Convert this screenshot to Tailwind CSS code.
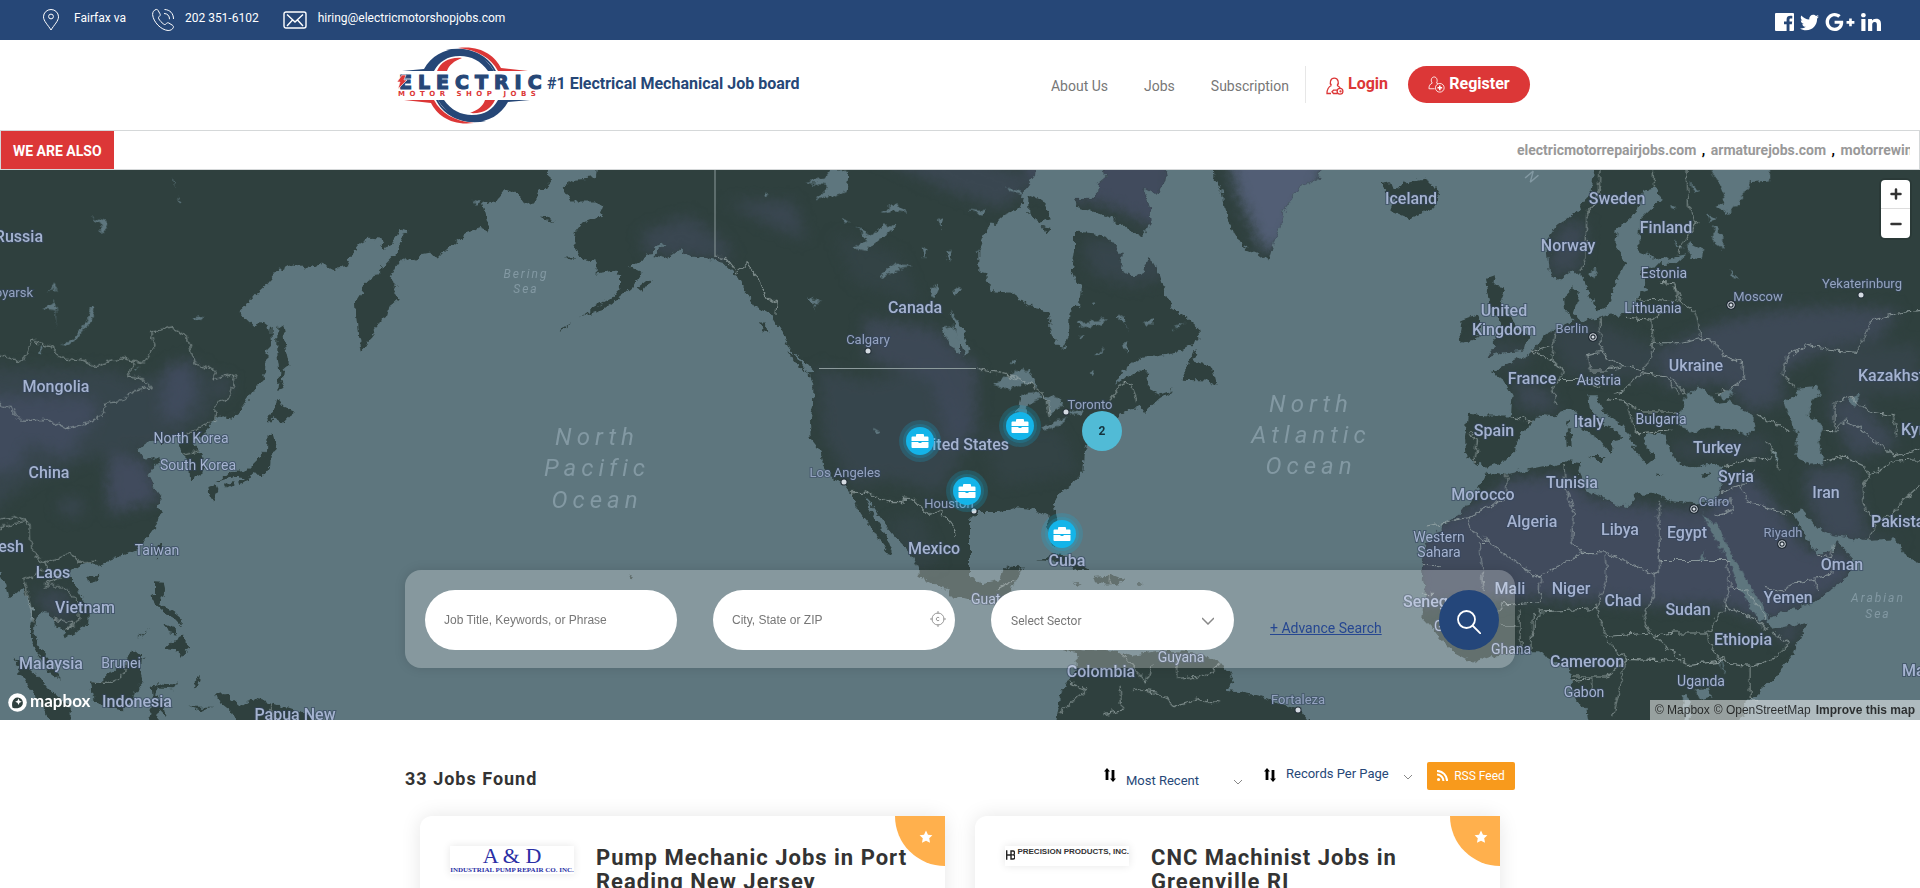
<!DOCTYPE html>
<html lang="en">
<head>
    <meta charset="UTF-8">
    <meta name="viewport" content="width=device-width, initial-scale=1.0">
    <script src="https://cdn.jsdelivr.net/npm/@tailwindcss/browser@4"></script>
    <title>Electric Motor Shop Jobs</title>
    <style>
        body { font-family: Roboto, 'Liberation Sans', sans-serif; }
    </style>
</head>
<body class="bg-white text-[#333] overflow-x-hidden">

<!-- top bar -->
<div class="flex items-center justify-between h-10 bg-[#264777] text-white text-xs pl-[42px] pr-[39px]">
    <div class="flex items-center">
        <svg class="w-[18px] h-[22px] mr-[14px]" viewBox="0 0 18 22" fill="none" stroke="currentColor"><path d="M9 21C6 16 1.500 12 1.500 7.800a7.500 7.300 0 0 1 15 0C16.500 12 12 16 9 21z"/><circle cx="9" cy="7.500" r="2.400"/></svg>
        <span class="mb-1 mr-[25px]">Fairfax va</span>
        <svg class="w-6 h-6 mr-[10px]" viewBox="0 0 24 24" fill="none" stroke="currentColor"><path d="M5 1.500C3 2 1.500 4 1.600 6.500c.6 7.500 8.500 15.500 15.500 16 2.500 0 4.400-1 5.200-3 .4-1-.1-1.700-.8-2.200l-3.700-2.300c-1-.5-1.700-.2-2.400.5-1.100 1.300-1.800 1.400-3 .4-2-1.600-3.400-3-4.500-4.900-.8-1.300-.4-1.900.6-2.800.8-.7 1-1.400.5-2.400L7 2.300C6.500 1.500 5.900 1.300 5 1.500zM13 5.500c3.500 0 5.600 2.400 5.500 5.700M13.500 1.500c5.500.2 9 4 9 9.500"/></svg>
        <span class="mb-1 mr-6">202 351-6102</span>
        <svg class="w-6 h-[18px] mr-[11px]" viewBox="0 0 24 18" fill="none" stroke="currentColor" stroke-width="1.400"><rect x="1" y="1" width="22" height="16" rx="2"/><path d="M4 3.500l8 7.500 8-7.500M4 15l5.500-6M20 15l-5.500-6"/></svg>
        <a class="mb-1" href="mailto:hiring@electricmotorshopjobs.com">hiring@electricmotorshopjobs.com</a>
    </div>
    <div class="flex items-center gap-[6px] pt-1">
        <a href="#" aria-label="Facebook"><svg class="w-[19px] h-[18px]" viewBox="0 0 19 18" fill="currentColor"><path d="M1 0h17a1 1 0 0 1 1 1v16a1 1 0 0 1-1 1h-3.500v-6.800h2.300l.4-2.800h-2.700V6.800c0-.9.300-1.400 1.400-1.400h1.400V2.900c-3.600-.5-5.700.4-5.700 3.600v1.900H9v2.800h2.600V18H1a1 1 0 0 1-1-1V1a1 1 0 0 1 1-1z"/></svg></a>
        <a href="#" aria-label="Twitter"><svg class="w-[19px] h-[19px]" viewBox="0 0 512 512" fill="currentColor"><path d="M459.37 151.716c.325 4.548.325 9.097.325 13.645 0 138.720-105.583 298.558-298.558 298.558-59.452 0-114.680-17.219-161.137-47.106 8.447.974 16.568 1.299 25.340 1.299 49.055 0 94.213-16.568 130.274-44.832-46.132-.975-84.792-31.188-98.112-72.772 6.498.974 12.995 1.624 19.818 1.624 9.421 0 18.843-1.300 27.614-3.573-48.081-9.747-84.143-51.980-84.143-102.985v-1.299c13.969 7.797 30.214 12.670 47.431 13.319-28.264-18.843-46.781-51.005-46.781-87.391 0-19.492 5.197-37.360 14.294-52.954 51.655 63.675 129.300 105.258 216.365 109.807-1.624-7.797-2.599-15.918-2.599-24.040 0-57.828 46.782-104.934 104.934-104.934 30.213 0 57.502 12.670 76.670 33.137 23.715-4.548 46.456-13.320 66.599-25.340-7.798 24.366-24.366 44.833-46.132 57.827 21.117-2.273 41.584-8.122 60.426-16.243-14.292 20.791-32.161 39.308-52.628 54.253z"/></svg></a>
        <a href="#" aria-label="Google Plus"><svg class="w-[30px] h-6" viewBox="0 0 640 512" fill="currentColor"><path d="M386.061 228.496c1.834 9.692 3.143 19.384 3.143 31.956C389.204 370.205 315.599 448 204.800 448c-106.084 0-192-85.915-192-192s85.916-192 192-192c51.864 0 95.083 18.859 128.611 50.292l-52.126 50.030c-14.145-13.621-39.028-29.599-76.485-29.599-65.484 0-118.920 54.221-118.920 121.277 0 67.056 53.436 121.277 118.920 121.277 75.961 0 104.513-54.745 108.965-82.773H204.800v-66.009h181.261zm185.406 6.437V179.200h-56.001v55.733h-55.733v56.001h55.733v55.733h56.001v-55.733H627.200v-56.001h-55.733z"/></svg></a>
        <a href="#" aria-label="LinkedIn"><svg class="w-5 h-[18px]" viewBox="0 0 448 448" fill="currentColor" preserveAspectRatio="none"><path d="M100.280 448H7.400V148.900h92.880zM53.790 108.100C24.090 108.100 0 83.500 0 53.800a53.790 53.790 0 0 1 107.580 0c0 29.700-24.100 54.300-53.790 54.300zM447.900 448h-92.680V302.400c0-34.700-.7-79.200-48.290-79.200-48.290 0-55.690 37.700-55.690 76.700V448h-92.780V148.900h89.080v40.800h1.300c12.400-23.500 42.690-48.300 87.880-48.300 94 0 111.280 61.900 111.280 142.300V448z"/></svg></a>
    </div>
</div>

<!-- header -->
<header class="h-[90px]">
    <div class="flex items-center justify-between h-full w-full max-w-[1140px] mx-auto pl-1">
        <a class="flex items-center" href="#">
            <svg class="w-[153px] h-[78px]" viewBox="0 0 153 78" role="img" aria-label="Electric Motor Shop Jobs">
                <g id="swoosh">
                    <path d="M8 25l22-2C37 10 50 3 64 3c16 0 29 10 36 22h-6C87 15 77 10 66 10c-13 0-21 6-26 15z" fill="#264777"/>
                    <path d="M52 4c24-5 43 6 50 21h-2C93 11 76 4 52 4z" fill="#264777"/>
                    <path d="M64 2c23-3 37 8 43 20l27 3h-30C97 12 84 4 64 2z" fill="#dc3737"/>
                    <path d="M43 25c4-9 12-14 25-13-8 3-13 7-15 13z" fill="#dc3737"/>
                </g>
                <use href="#swoosh" transform="rotate(180 72 39.500)"/>
                <g font-family="'DejaVu Sans', sans-serif" font-weight="700">
                    <text x="5" y="43" font-size="19" letter-spacing="6" fill="#264777" stroke="#264777" stroke-width="1.200">ELECTRIC</text>
                    <text x="4" y="50" font-size="7" letter-spacing="4.500" fill="#dc3737">MOTOR SHOP JOBS</text>
                </g>
                <path d="M8 29h4l-2 5h3L4 43l2-7H3z" fill="#dc3737" stroke="#fff" stroke-width=".6"/>
            </svg>
            <span class="font-bold text-base text-[#264777] -mt-[2px]">#1 Electrical Mechanical Job board</span>
        </a>
        <nav class="flex items-center text-sm text-[#777]">
            <a class="mr-9 pt-[2px]" href="#">About Us</a>
            <a class="mr-9 pt-[2px]" href="#">Jobs</a>
            <a class="pt-[2px]" href="#">Subscription</a>
            <div class="flex items-center h-[37px] -mt-[2px] ml-4 pl-5 border-l border-[#e7e7e7]">
                <a class="flex items-center gap-1 font-bold text-base leading-5 text-[#dc3737]" href="#">
                    <svg class="w-[18px] h-[18px] mt-1" viewBox="0 0 18 18" fill="none" stroke="currentColor" stroke-width="1.300"><path d="M5.500 8.500C3 6 4.500 1.200 8.300 1.200s5.300 4.800 2.800 7.300M5.500 8.500C3 9.500 1 12.500 1 16.500h4M11 8.500c1.500.6 2.500 1.500 3.200 2.500M11.500 13.200H7.500l-1.500 1.500 1.500 1.800h4"/><circle cx="14" cy="14.300" r="2.900"/><circle cx="14.500" cy="14.300" r=".5"/></svg>
                    Login
                </a>
                <a class="flex items-center justify-center gap-1 w-[122px] h-[37px] ml-5 rounded-full bg-[#dc3737] text-white font-bold text-base leading-5" href="#">
                    <svg class="w-[17px] h-[17px]" viewBox="0 0 18 18" fill="none" stroke="currentColor" stroke-width=".9"><path d="M4.500 7.500C2.500 5 3.500 1 6.500 1s4 4 2.500 6.500M4.500 7.500C2 8.500 1 10.500 1 13.500h6M9 7.500l1.500.5"/><circle cx="12.500" cy="12.500" r="4.600"/><path d="M12.500 10v5M10 12.500h5" stroke-width="1.600"/></svg>
                    Register
                </a>
            </div>
        </nav>
    </div>
</header>

<!-- network strip -->
<div class="flex items-center h-10 border border-[#d5d8d9] text-sm font-bold">
    <div class="flex items-center h-full px-3 pt-[2px] bg-[#dc3737] text-white">WE ARE ALSO</div>
    <div class="ml-auto mr-[9px] w-[393px] overflow-hidden whitespace-nowrap text-[#999]">
        <a href="#">electricmotorrepairjobs.com</a><span class="text-black mx-[2px]"> , </span><a href="#">armaturejobs.com</a><span class="text-black mx-[2px]"> , </span><a href="#">motorrewindingjobs.com</a>
    </div>
</div>

<!-- map -->
<section class="relative h-[550px] bg-[#5e767e] overflow-hidden">
    <svg class="w-full h-full block" viewBox="0 0 1920 550" preserveAspectRatio="xMidYMid slice">
        <defs>
            <filter id="rough" x="0" y="0" width="1920" height="550" filterUnits="userSpaceOnUse" color-interpolation-filters="sRGB">
                <feTurbulence type="fractalNoise" baseFrequency="0.14" numOctaves="3" seed="4" result="n"/>
                <feDisplacementMap in="SourceGraphic" in2="n" scale="8" xChannelSelector="R" yChannelSelector="G"/>
            </filter>
            <filter id="soft" color-interpolation-filters="sRGB"><feGaussianBlur stdDeviation="20"/></filter>
            <path id="asia" d="M-60-60H1640L1650 40 1620 60 1600 100 1570 90 1550 65 1515 55 1490 85 1445 95 1465 150 1468 175 1445 165 1400 180 1365 205 1330 235 1310 255 1290 235 1262 240 1245 255 1225 250 1200 260 1185 280 1172 305 1190 330 1180 350 1193 370 1172 385 1165 415 1140 430 1125 460 1110 480 1095 505 1082 512 1075 480 1070 430 1065 380 1085 350 1090 325 1120 310 1150 275 1190 235 1205 200 1222 175 1200 168 1190 190 1175 210 1150 225 1140 195 1110 193 1080 210 1055 240 1040 275 1000 285 960 265 930 280 880 272 835 285 800 325 760 360 735 390 715 408 745 430 760 445 790 432 815 450 815 490 800 520 798 580 770 615 740 655 715 690 685 710 660 700 640 715 620 740 622 750 590 765 580 780 600 800 612 840 605 865 570 882 568 830 545 810 540 785 560 755 520 760 490 785 470 770 440 775 415 795 435 825 480 825 460 850 445 870 465 910 485 935 470 960 487 975 470 1010 440 1050 410 1080 350 1105 290 1130 265 1118 240 1125 215 1140 212 1165 240 1210 270 1250 268 1290 230 1315 200 1335 190 1310 165 1300 150 1265 120 1260 105 1290 100 1320 125 1370 150 1400 175 1440 182 1455 150 1430 120 1385 90 1340 90 1300 100 1270 85 1220 70 1190 50 1205 25 1220 15 1180 0 1150-60 1120z"/>
            <path id="isles" d="M832 450L848 440 855 500 868 555 850 570 845 600 855 625 832 630 838 580 832 520zM828 652L850 675 885 690 865 705 848 722 820 705 805 720 800 705 822 690zM800 755L822 755 828 790 812 820 810 850 795 870 765 868 740 880 700 875 650 890 690 862 735 858 770 825 798 800zM625 905L650 895 655 915 640 945 628 925zM672 900L700 888 700 900 675 912zM715 890L738 875 732 892 718 898zM265 1160L298 1150 290 1170 270 1175zM470 1070L485 1060 478 1095 468 1105zM465 1175L492 1177 495 1200 480 1235 500 1250 520 1260 545 1280 545 1300 520 1275 490 1260 460 1235 455 1215 465 1210zM490 1290L515 1300 530 1325 505 1320zM515 1345L550 1330 565 1355 548 1385 530 1370 495 1365zM38 1390L70 1405 110 1440 160 1490 212 1530 212 1580H160L130 1530 90 1480zM270 1455L300 1460 320 1440 375 1410 390 1380 405 1370 435 1392 415 1410 430 1460 410 1480 400 1510 370 1540 310 1530 275 1500zM455 1465L530 1470 538 1455 520 1480 470 1478 465 1500 490 1520 500 1560 478 1540 470 1580H445L458 1510zM645 1495L685 1490 695 1510 720 1530 760 1505 820 1520 900 1545 960 1580H720L690 1540 650 1510zM585 1450L600 1440 595 1470 582 1480zM565 1530L640 1530 600 1540zM412 1337L448 1305 430 1325z"/>
            <path id="west" d="M365-60L350 20 290 25 245 50 275 90 345 90 370 105 360 130 310 150 285 180 280 210 300 250 350 258 350 295 400 288 420 300 420 335 400 360 345 390 300 420 370 398 430 355 460 330 485 290 450 275 480 262 500 250 530 215 560 208 520 245 555 255 600 225 640 250 690 255 730 265 770 300 800 350 830 390 870 410 890 440 910 470 930 510 960 545 985 580 1000 610 1000 650 990 710 992 765 1020 800 1035 850 1060 880 1095 900 1115 925 1130 960 1150 990 1175 1020 1200 1060 1225 1090 1240 1095 1220 1040 1190 1000 1165 960 1155 935 1180 960 1215 1010 1250 1050 1290 1090 1310 1130 1320 1160 1380 1190 1470 1220V-60zM180 130L200 132 230 148 205 145zM255 250L285 248 275 258zM470 335L500 312 515 315 490 348zM-60-60H10V100L30 165 25 178 0 160-40 60zM840 435L860 435 865 465 850 460zM922 520L950 525 1000 575 985 580 945 550zM448 1150L465 1155 455 1165zM232 458L270 437 255 452z"/>
            <path id="east" d="M-30-60H230L225 15 190 60 180 110 130 130 80 170 55 230 55 290 80 295 92 345 150 350 220 395 268 405 268 450 280 480 310 510 325 480 325 410 360 385 365 340 335 290 345 230 345 175 400 180 440 190 485 240 480 280 520 305 550 290 568 245 590 280 610 340 640 395 680 420 715 450 718 485 690 500 650 520 600 530 540 535 490 570 465 612 530 570 565 575 560 620 600 640 645 625 600 650 555 690 545 675 500 685 465 710 430 735 385 770 375 800 370 860 340 890 300 920 280 950 290 990 305 1040 300 1075 275 1070 265 1020 262 985 240 975 200 965 160 960 110 975 50 975 15 1010 0 1060 5 1110 30 1160 70 1180 120 1170 130 1140 150 1128 188 1130 175 1160 150 1197 160 1210 150 1260 200 1320 320 1360 480 1372 520 1385 600 1370 700 1375 760 1395 795 1415 820 1460 800 1485 850 1490 900 1500 960 1520 1020 1540 1065 1600H285L300 1500 320 1460 350 1430 350 1375 200 1340 140 1260 100 1235 50 1225-30 1215z"/>
            <path id="arctic" d="M420-60H610L620 20 590 70 550 50 570 110 575 150 545 190 500 165 450 135 350 105 345 80 410 80 415 40 440 20zM205 70L245 85 275 140 240 150 205 125zM245 160L270 165 255 182zM755-60H1095L1080 20 1020 50 975 110 965 150 940 210 925 260 890 235 850 220 810 160 790 100 785 60 760 20zM1260 40L1290 35 1300 60 1330 40 1390 25 1420 40 1440 70 1420 110 1350 138 1290 115 1300 90zM705 510L715 520 700 545 755 560 770 615 740 600 662 598 680 560zM232 1110L280 1095 340 1110 390 1140 350 1140 300 1115zM400 1160L460 1155 500 1170 470 1180 440 1182 405 1175zM340 1178L365 1178 355 1185zM530 1178H548L540 1183z"/>
            <path id="europe" d="M470-60L455 60 410 120 350 160 320 200 330 290 355 315 400 285 430 310 450 360 475 400 505 385 520 340 545 290 560 260 525 220 530 170 590 120 610 60 650 50 665 80 600 140 598 230 660 255 740 240 710 265 640 270 600 290 625 340 595 350 590 385 560 410 510 415 470 425 430 430 400 410 420 350 400 335 372 360 375 400 400 430 345 455 310 475 270 525 200 555 155 575 190 600 215 640 210 700 150 700 85 695 75 760 80 825 105 830 130 850 190 835 225 800 235 755 280 725 290 700 340 705 385 675 410 690 430 740 480 770 515 810 520 770 550 765 500 730 450 680 445 645 470 645 490 690 540 720 565 750 580 790 620 840 645 820 610 780 620 750 680 755 690 800 710 830 750 850 800 835 850 845 845 900 835 930 820 950 760 950 700 945 630 920 590 925 560 965 500 940 440 915 415 860 420 835 380 830 280 850 200 868 140 860 110 920 60 980 10 1010-40 1070-55 1130-45 1200-50 1280-20 1310 0 1335 50 1380 100 1405 160 1385 230 1375 300 1375 345 1400 390 1420 400 1500 440 1540 450 1600H890L920 1520 1000 1450 1060 1380 1100 1288 1000 1310 975 1285 1040 1255 1120 1235 1215 1165 1250 1120 1190 1060 1180 1090 1130 1095 1100 1050 1060 980 1085 965 1120 1010 1180 1040 1280 1055 1365 1050 1400 1100 1500 1150V-60z"/>
            <path id="britain" d="M135 310L165 300 160 330 195 335 180 370 200 410 235 450 265 475 255 510 190 520 140 535 165 505 160 480 185 440 150 390 140 340zM65 430L110 415 125 440 110 480 65 495 60 460zM445 815L490 815 485 835zM378 750L392 740 395 785 380 790zM380 715L390 712 388 735zM640 865L675 868 650 870zM785 872L815 865 795 878z"/>
            <clipPath id="land">
                <use href="#asia"/><use href="#isles"/>
                <use href="#west" transform="translate(1440 0)"/>
                <use href="#east" transform="translate(2880 0)"/><use href="#arctic" transform="translate(2880 0)"/>
                <use href="#europe" transform="translate(4320 0)"/><use href="#britain" transform="translate(4320 0)"/>
            </clipPath>
            <g id="case">
                <circle r="21" fill="#0fb4e8" opacity=".2"/><circle r="17" fill="#0fb4e8" opacity=".2"/>
                <circle r="14" fill="#14b4e9"/>
                <path d="M-7.500-4.500H-4v-1.500q0-1 1-1h6q1 0 1 1v1.500h3.500q1 0 1 1V0h-17v-3.500q0-1 1-1zM-8.500 1h7v1h3V1h7v5q0 1-1 1h-15q-1 0-1-1z" fill="#fff"/>
            </g>
            <g id="capital" fill="none" stroke="#d5dbe2"><circle r="5" fill="#232d36" stroke="none"/><circle r="3.300" stroke-width="1"/><circle r="1.500" fill="#d5dbe2" stroke="none"/></g>
            <g id="town"><circle r="3.600" fill="#26323a"/><circle r="2.500" fill="#d5dbe2"/></g>
        </defs>

        <!-- land: traced on a 5760 x 1568 sheet -->
        <g filter="url(#rough)">
            <g transform="scale(.33333 .35077)">
                <g clip-path="url(#land)">
                    <rect x="-60" y="-60" width="5900" height="1700" fill="#2f403e"/>
                    <g filter="url(#soft)" fill="#414b5d">
                        <path d="M-60 640L280 650 290 710 240 760 210 820 80 780 60 850-60 870zM500 560L570 540 590 640 540 720 480 700zM330 800L440 830 480 940 330 980 320 880z"/>
                        <path d="M-60 560L350 570 420 620 340 800 100 880-60 1000zM380 600L620 560 640 700 460 800 340 800z" opacity=".45"/>
                        <path d="M100 1200L200 1200 220 1300 130 1260zM640 590L700 600 680 650 640 640zM180 940L250 940 240 990 180 980z" opacity=".6"/>
                        <path d="M1920 180L2060 130 2170 200 2200 260 2120 250 1940 240z" opacity=".6"/>
                        <path d="M2180 90L2380 90 2420 200 2340 170zM2600-50H2900L3120 30 3000 110 2850 60z" opacity=".6"/>
                        <path d="M2590 420L2800 450 2930 560 2930 740 2850 800 2800 600 2600 540z" opacity=".75"/>
                        <path d="M2450 560L2600 600 2800 560 2920 760 2820 920 2660 880 2560 900 2470 760zM3240 200L3440 200 3520 300 3400 330 3280 300z" opacity=".45"/>
                        <path d="M2660 1000L2760 980 2820 1120 2740 1140zM2940 740L3180 740 3240 860 3000 900zM2500 180L2700 240 2760 380 2560 320z" opacity=".25"/>
                        <path d="M3680-50H3990L3950 60 3900 110 3840 220 3790 230 3710 60z" fill="#525e75"/>
                        <path d="M3050-50H3530L3500 180 3320 100 3120 60z"/>
                        <path d="M4290 1020L4450 940 4530 880 4700 870 4780 940 4980 960 5130 970 5160 900 5260 870 5330 960 5420 1080 5560 1090 5540 1180 5300 1290 5180 1240 4960 1240 4820 1230 4600 1220 4250 1240 4250 1080z"/>
                        <path d="M5170 430L5330 400 5500 390 5700 400 5640 480 5500 500 5340 580 5350 660 5250 690 5180 610 5000 620 4960 520zM5420 850L5560 850 5600 1040 5720 1060 5480 1060 5420 940zM5480 670L5560 640 5700 780 5560 820z" opacity=".8"/>
                        <path d="M4540 600L4640 620 4680 690 4560 680zM4680 150L4760 150 4740 280 4640 300zM5320 1300L5420 1280 5380 1350 5330 1340z" opacity=".7"/>
                        <path d="M5020 770L5300 760 5300 820 5020 830zM4640 460L4780 430 4960 500 4960 600 4700 580zM4400 480L4600 500 4580 560 4440 560zM5500 500L5760 500V640H5480z" opacity=".4"/>
                    </g>
                </g>
                <!-- lakes and inland seas -->
                <g fill="#5e767e">
                    <path d="M180 495L205 490 245 455 265 420 275 388 285 390 275 430 240 470 205 500zM120 500L128 502 124 525 118 522zM130 395L165 370 172 455 165 400zM140 350L160 320 175 350 158 335zM275 135L325 150 305 185 300 155zM515 18L527 45 520 40zM533 75L552 92 545 98zM580 422L605 415 605 425 588 432zM400 570L418 560 408 575zM1415 85L1440 90 1430 102z"/>
                    <g transform="translate(1440 0)"><path d="M975 35L1030 25 1060-10 1105 10 1100 60 1060 75 1010 80 1045 45zM1085 135L1110 148 1095 152zM1125 160L1175 190 1210 155 1250 158 1220 185 1190 205 1150 230 1120 222 1165 200zM1200 300L1240 270 1300 275 1250 285 1210 308zM1200 125L1245 95 1285 125 1240 115zM1370 145L1390 135 1385 165zM1355 335L1378 320 1365 365 1350 360zM1325 220L1340 225 1332 250zM1400 230L1415 228 1410 262zM1385 450L1420 445 1440 480 1440 530 1410 495zM980 360L1025 378 1000 380 1010 400zM1180 735L1198 745 1192 755zM1415 345L1440 335 1430 360zM855 65L870 72 858 78z"/></g>
                    <g transform="translate(2880 0)"><path d="M-30 400L5 450 28 510 15 530-5 480zM100 615L130 595 170 570 205 570 230 615 195 610 150 625zM185 640L235 635 245 650 205 665 195 700 170 690zM245 640L295 650 310 670 285 680 270 710 265 660zM245 735L280 715 328 705 290 730 262 740zM325 688L370 680 360 698 328 696zM155 545L168 535 165 555 150 555zM350 435L445 425 425 440 360 450zM470 420L495 412 485 430 512 465 495 440zM550 435L585 425 585 440 560 440zM405 530L430 505 415 530zM385 575L405 570 400 582zM488 495L505 490 500 520zM390 375L410 375 400 382zM25 110L75 115 65 130zM358 470L375 475 365 482zM640 450L675 432 655 450zM140 50L195 65 185 70 150 62z"/></g>
                    <g transform="translate(4320 0)"><path d="M775-60L830 30 860 80 830 105 870 125 910 80 930 35 990 30V-60zM745 205L790 225 785 255 745 245zM820 155L850 190 850 225 820 205zM800 125L830 140 812 145zM865 285L895 310 875 305zM750 35L780 60 765 65zM700 200L735 225 710 215zM690 100L710 105 695 112zM445 290L470 280 460 310z"/>
                    <path d="M715 725L720 690 740 640 775 620 810 640 830 665 870 660 930 695 945 740 920 755 860 735 800 735 750 750zM830 640L885 618 870 650 850 652zM1030 660L1070 640 1080 620 1130 615 1145 640 1110 660 1105 700 1150 730 1135 770 1155 835 1110 840 1065 810 1075 760 1040 690zM785 975L830 1060 870 1120 900 1200 960 1285 990 1275 960 1230 900 1140 860 1060 825 1000 815 1010 800 990zM1225 650L1260 640 1245 680zM1000 800L1015 820 1005 830zM765 1480L810 1475 815 1500 780 1510zM725 1500L745 1500 750 1580H735zM775 1115L795 1080 790 1105zM840 1390L858 1440 848 1430z"/></g>
                </g>
                <!-- borders -->
                <g fill="none" stroke="#a3b0b0" stroke-opacity=".75">
                    <g stroke-width="3"><path d="M-20 525L70 545 95 487 150 500 180 535 240 540 290 560 360 535 430 550 465 500 455 465 515 447 560 475 585 550 640 570 640 598 705 580 690 650 650 665 645 715 560 750M400 545L382 590 430 595 452 620 400 630 365 660 315 665 310 695 275 718 195 737 150 715 50 712 35 680-20 665M0 995L50 985 90 1010 92 1080 130 1120 180 1105 210 1090 235 1118 290 1115M130 1120L155 1150 180 1160 130 1185 190 1185 240 1240 235 1290 200 1310M70 1170L130 1140M75 1170L100 1290M160 1280L220 1290 200 1310M0 1020L80 1000M275 1460L340 1460 378 1430 380 1400M815 1520V1580M545 810L600 800"/></g>
                    <g transform="translate(4320 0)" stroke-width="3"><path d="M480-20L478 60 465 100 440 125 438 250 420 290M640-20L640 50M740-20L745 100 770 150 710 240M660 320L705 325 720 375 760 400 785 480 720 495 635 495M590 370L700 375M705 330L710 375M560 420L635 425 640 520 610 570 550 560 480 520 440 530 450 570 500 570 550 560M635 430L680 400M780 480L815 485 850 530 910 550 910 600 830 640M480 425L485 520M345 455L335 540 370 570 360 600 335 630 355 670M275 515L340 545M360 600L440 600M210 700L280 718M105 830L112 770 85 750M500 655L560 660 610 690 710 690M520 640L550 630 600 580 680 590 720 640M690 590L740 640M560 660L570 700 590 750 690 740M440 600L480 620M280 515L330 500M945 700L1000 720 1050 745M980 770L1000 800 1020 860M850 845L910 830 990 820M900 910L940 850M840 920L900 900 920 940 1000 970 1060 980M820 950L870 940 880 970 830 985M1270 490L1250 520 1160 510 1100 500 1040 530 1030 580 1065 620M1270 490L1290 430 1390 405 1450 400M1185 745V660L1230 645 1290 690 1360 700 1370 760M1150 740H1190L1215 715 1270 740 1300 770 1365 815 1450 790M1155 830L1210 815 1270 840 1290 870 1265 900 1275 970 1310 1000 1285 1055M1290 870L1360 830 1450 825M1450 890L1390 940 1360 980 1310 1000M655 940L658 1113H870M658 1113V1145L640 1150 500 1092 430 1090 395 1060 400 970 375 900 372 840M200 868V935L85 990V1020M85 990L-40 1015M85 1020L290 1160 435 1088M118 1062H140L120 1062 132 1200M285 1160H302L300 1230 190 1240 150 1290M495 1092L500 1160 470 1250 300 1260M640 1150V1220L610 1270 630 1320 500 1330 480 1280 465 1240M860 1110L870 1190 850 1250 800 1320 700 1320 640 1330M870 1190L920 1200 985 1280M850 1240L960 1290 980 1310M800 1320L820 1370 870 1410 930 1415 1000 1395 1050 1350 1000 1320M930 1415V1500L950 1520M870 1410L830 1390M630 1320L740 1410 850 1400M490 1330L560 1395 700 1400M560 1395L540 1470 520 1560M400 1445H500L560 1395M240 1255V1375M280 1260L275 1370M300 1255L280 1320M185 1300L235 1300M1130 1100L1170 1105 1185 1070M1035 1200L1060 1175 1170 1155 1180 1110M970 1190L1035 1200M1120 1165L1135 1200M395 1460L455 1450V1480"/></g>
                    <g transform="translate(2880 0)" stroke-width="3"><path d="M50 565L150 585 230 620 265 660 270 710M450 660L490 605 515 610 530 660M320 1460L380 1480 330 1520 300 1550M480 1372L520 1420 560 1460 580 1410M650 1400L650 1450 740 1440 780 1410M520 1480L600 1490 640 1530 720 1510 780 1520M480 1470L485 1540 430 1550M110 1195L165 1170M1385 1128H1440M1390 1210H1420M450 1155L448 1180"/></g>
                    <g transform="translate(1440 0)" stroke-width="3"><path d="M705 245L735 250 770 290 800 265 830 300 860 365 892 375 888 410M1110 920L1155 918 1215 945H1265L1268 935 1300 937 1350 985 1380 970 1415 1010 1425 1040"/></g>
                </g>
            </g>
        </g>
        <g stroke="#8c9a9b" stroke-width="1"><path d="M715 0V86"/><path d="M819 198.500H976"/></g>

        <!-- sea names -->
        <g fill="#8399a3" font-style="italic" text-anchor="middle">
            <g font-size="24" letter-spacing="5">
                <text x="597" y="275">North</text><text x="597" y="306">Pacific</text><text x="597" y="338">Ocean</text>
                <text x="1311" y="242">North</text><text x="1311" y="273">Atlantic</text><text x="1311" y="304">Ocean</text>
            </g>
            <g font-size="12" letter-spacing="2">
                <text x="526" y="108">Bering</text><text x="526" y="123">Sea</text>
                <text x="1878" y="432">Arabian</text><text x="1878" y="448">Sea</text>
            </g>
            <text x="1532" y="12" font-size="15" transform="rotate(40 1532 6)">N</text>
        </g>

        <!-- countries -->
        <g fill="#a5b3d0" stroke="#33445f" stroke-opacity=".6" stroke-width="2" paint-order="stroke" font-weight="500" text-anchor="middle">
            <g font-size="16">
                <text x="56" y="222">Mongolia</text><text x="49" y="308">China</text><text x="53" y="408">Laos</text><text x="85" y="443">Vietnam</text>
                <text x="51" y="499">Malaysia</text><text x="137" y="537">Indonesia</text><text x="295" y="550">Papua New</text>
                <text x="915" y="143">Canada</text><text x="934" y="384">Mexico</text><text x="1067" y="396">Cuba</text><text x="1101" y="507">Colombia</text>
                <text x="1411" y="34">Iceland</text><text x="1617" y="34">Sweden</text><text x="1666" y="63">Finland</text><text x="1568" y="81">Norway</text>
                <text x="1504" y="146">United</text><text x="1504" y="165">Kingdom</text><text x="1532" y="214">France</text><text x="1696" y="201">Ukraine</text>
                <text x="1494" y="266">Spain</text><text x="1589" y="257">Italy</text><text x="1717" y="283">Turkey</text><text x="1736" y="312">Syria</text>
                <text x="1572" y="318">Tunisia</text><text x="1483" y="330">Morocco</text><text x="1826" y="328">Iran</text><text x="1532" y="357">Algeria</text>
                <text x="1620" y="365">Libya</text><text x="1687" y="368">Egypt</text><text x="1842" y="400">Oman</text><text x="1510" y="424">Mali</text>
                <text x="1571" y="424">Niger</text><text x="1623" y="436">Chad</text><text x="1688" y="445">Sudan</text><text x="1788" y="433">Yemen</text>
                <text x="1743" y="475">Ethiopia</text><text x="1587" y="497">Cameroon</text>
                <g text-anchor="end"><text x="43" y="72">Russia</text><text x="24" y="382">Bangladesh</text><text x="1009" y="280">United States</text></g>
                <g text-anchor="start"><text x="1403" y="437">Senegal</text><text x="1858" y="211">Kazakhstan</text><text x="1901" y="265">Kyrgyzstan</text><text x="1871" y="357">Pakistan</text><text x="1902" y="506">Maldives</text></g>
            </g>
            <g font-size="14" font-weight="400">
                <text x="191" y="273">North Korea</text><text x="198" y="300">South Korea</text><text x="157" y="385">Taiwan</text><text x="121" y="498">Brunei</text>
                <text x="1181" y="492">Guyana</text><text x="1439" y="372">Western</text><text x="1439" y="387">Sahara</text><text x="1664" y="108">Estonia</text>
                <text x="1653" y="143">Lithuania</text><text x="1599" y="215">Austria</text><text x="1661" y="254">Bulgaria</text><text x="1511" y="484">Ghana</text>
                <text x="1584" y="527">Gabon</text><text x="1701" y="516">Uganda</text>
                <text x="971" y="434" text-anchor="start">Guatemala</text><text x="1434" y="461" text-anchor="start">Guinea</text>
            </g>
        </g>

        <!-- cities -->
        <g fill="#94a3c0" stroke="#33445f" stroke-opacity=".5" stroke-width="2" paint-order="stroke" font-size="13" text-anchor="middle">
            <text x="33" y="127" text-anchor="end">Krasnoyarsk</text><text x="868" y="174">Calgary</text><text x="845" y="307">Los Angeles</text>
            <text x="949" y="338">Houston</text><text x="1090" y="239">Toronto</text><text x="1298" y="534">Fortaleza</text><text x="1758" y="131">Moscow</text>
            <text x="1862" y="118">Yekaterinburg</text><text x="1572" y="163">Berlin</text><text x="1714" y="336">Cairo</text><text x="1783" y="367">Riyadh</text>
        </g>
        <use href="#town" x="868" y="181"/><use href="#town" x="844" y="312"/><use href="#town" x="974" y="341"/><use href="#town" x="1066" y="242"/><use href="#town" x="1298" y="540"/><use href="#town" x="1861" y="125"/>
        <use href="#capital" x="1731" y="135"/><use href="#capital" x="1593" y="167"/><use href="#capital" x="1694" y="339"/><use href="#capital" x="1782" y="374"/>

        <!-- job pins -->
        <use href="#case" x="920" y="271"/><use href="#case" x="1020" y="256"/><use href="#case" x="967" y="321"/><use href="#case" x="1062" y="364"/>
        <circle cx="1102" cy="261" r="20" fill="#51bbd6"/>
        <text x="1102" y="265" font-size="12" font-weight="700" text-anchor="middle" fill="#14323c">2</text>
    </svg>

    <!-- zoom -->
    <div class="absolute top-[10px] right-[10px] w-[29px] rounded bg-white divide-y divide-[#ddd] shadow-[0_0_0_2px_rgba(0,0,0,0.1)]">
        <button class="flex items-center justify-center w-full h-[29px]" aria-label="Zoom in"><svg class="w-3 h-3" viewBox="0 0 12 12" stroke="#333" stroke-width="2.500" stroke-linecap="round"><path d="M1.500 6h9M6 1.500v9"/></svg></button>
        <button class="flex items-center justify-center w-full h-[29px]" aria-label="Zoom out"><svg class="w-3 h-3" viewBox="0 0 12 12" stroke="#333" stroke-width="2.500" stroke-linecap="round"><path d="M1.500 6h9"/></svg></button>
    </div>

    <!-- mapbox mark -->
    <a class="absolute left-2 bottom-2 flex items-center gap-[3px] h-5 text-white" href="#">
        <svg class="w-[19px] h-[19px]" viewBox="0 0 19 19"><circle cx="9.500" cy="9.500" r="9.300" fill="#fff"/><path d="M4.500 14.800c-1-3.600-.4-6.800 1.600-8.800a5.200 5.200 0 0 1 7.400 7.300c-2 2-5.400 2.600-9 1.500z" fill="#2f403e"/><path d="M10.500 5.500l1 2.300 2.300 1-2.300 1-1 2.300-1-2.300-2.300-1 2.300-1z" fill="#fff"/></svg>
        <span class="font-['Lato'] font-bold text-[17px] leading-5 pb-[2px]">mapbox</span>
    </a>

    <!-- attribution -->
    <div class="absolute right-0 bottom-0 flex gap-1 h-5 px-[5px] bg-white/50 text-xs leading-5 text-black/75 font-['Liberation_Sans'] whitespace-nowrap">
        <a href="#">© Mapbox</a><a class="mr-px" href="#">© OpenStreetMap</a><a class="font-bold" href="#">Improve this map</a>
    </div>

    <!-- search -->
    <form class="absolute inset-x-0 bottom-[52px] mx-auto w-full max-w-[1110px] grid grid-cols-[252px_242px_243px_1fr_60px] gap-9 pl-5 pr-4 pt-5 pb-[18px] rounded-2xl bg-white/25 shadow-[0_0_12px_rgba(0,0,0,0.12)] text-[#777]">
        <input class="h-[60px] min-w-0 px-[19px] rounded-full bg-white text-xs font-['Liberation_Sans'] placeholder:text-[#777] outline-none" type="text" aria-label="Keywords" placeholder="Job Title, Keywords, or Phrase">
        <div class="relative">
            <input class="w-full h-[60px] px-[19px] rounded-full bg-white text-xs font-['Liberation_Sans'] placeholder:text-[#777] outline-none" type="text" aria-label="Location" placeholder="City, State or ZIP">
            <svg class="absolute right-[9px] top-[21px] w-4 h-4" viewBox="0 0 16 16" fill="none" stroke="#999"><circle cx="8" cy="8" r="6"/><path d="M8 0v3M8 13v3M0 8h3M13 8h3M9.200 6.800a1.700 1.700 0 1 0 0 2.400"/></svg>
        </div>
        <div class="relative">
            <select class="w-full h-[60px] px-5 pt-[2px] rounded-full bg-white text-xs text-[#777] appearance-none outline-none" aria-label="Sector"><option>Select Sector</option></select>
            <svg class="absolute right-5 top-[27px] w-3 h-2" viewBox="0 0 12 8" fill="none" stroke="#888" stroke-width="1.500"><path d="M0 1l6 6 6-6"/></svg>
        </div>
        <a class="self-center mt-4 text-sm underline text-[#264791]" href="#">+ Advance Search</a>
        <button class="flex items-center justify-center w-[60px] h-[60px] rounded-full bg-[#24467a] text-white" aria-label="Search"><svg class="w-6 h-6 mt-1" viewBox="0 0 24 24" fill="none" stroke="currentColor" stroke-width="1.800"><circle cx="9.500" cy="9.500" r="8.500"/><path d="M15.500 15.500L24 24"/></svg></button>
    </form>
</section>

<!-- results -->
<main class="w-full max-w-[1110px] mx-auto pt-[42px]">
    <div class="flex items-start justify-between h-[54px]">
        <h1 class="pt-[7px] text-lg leading-5 font-bold tracking-[1px]">33 Jobs Found</h1>
        <div class="flex items-start text-[13px] leading-5 text-[#264777]">
            <svg class="w-3 h-[14px] mt-[6px] mr-[10px]" viewBox="0 0 12 14" fill="#000"><path id="sort" d="M3 0l3 3.500H4.400V12H1.600V3.500H0zM9 14l3-3.500h-1.600V2H7.600v8.500H6z"/></svg>
            <div class="relative w-[116px] mt-[9px] mr-[22px]">
                <select class="block w-full appearance-none outline-none" aria-label="Sort by"><option>Most Recent</option></select>
                <svg class="absolute right-0 top-2 w-2 h-[6px]" viewBox="0 0 8 6" fill="none" stroke="#888"><path d="M0 1l4 4 4-4"/></svg>
            </div>
            <svg class="w-3 h-[14px] mt-[6px] mr-[10px]" viewBox="0 0 12 14" fill="#000"><use href="#sort"/></svg>
            <div class="relative w-[126px] mt-[2px] mr-[15px]">
                <select class="block w-full appearance-none outline-none" aria-label="Records per page"><option>Records Per Page</option></select>
                <svg class="absolute right-0 top-[10px] w-2 h-[6px]" viewBox="0 0 8 6" fill="none" stroke="#888"><path d="M0 1l4 4 4-4"/></svg>
            </div>
            <a class="flex items-center justify-center gap-[6px] w-[88px] h-7 rounded-xs bg-[#f89a1c] text-xs text-white" href="#">
                <svg class="w-[11px] h-[11px] -mt-[2px]" viewBox="0 0 12 12" fill="none" stroke="currentColor" stroke-width="2.200"><circle cx="1.700" cy="10.300" r="1.700" fill="currentColor" stroke="none"/><path d="M0 5a7 7 0 0 1 7 7M0 1a11 11 0 0 1 11 11"/></svg>
                RSS Feed
            </a>
        </div>
    </div>

    <div class="grid grid-cols-2 gap-[30px] px-[15px]">
        <article class="relative flex gap-[22px] px-[30px] pt-[30px] pb-8 rounded-xl shadow-[0_0_20px_rgba(0,0,0,0.1)]">
            <a class="shrink-0 w-[124px] h-7 shadow-[0_0_8px_rgba(0,0,0,0.1)] flex flex-col items-center font-['Liberation_Serif'] text-[#2a2fa5] whitespace-nowrap" href="#">
                <span class="text-[22px] leading-5">A &amp; D</span>
                <span class="text-[7px] leading-2 font-bold">INDUSTRIAL PUMP REPAIR CO. INC.</span>
            </a>
            <h2 class="text-[22px] leading-6 font-bold tracking-[1px]"><a href="#">Pump Mechanic Jobs in Port<br>Reading New Jersey</a></h2>
            <span class="absolute top-0 right-0 flex items-center justify-center w-[50px] h-[50px] pl-3 pb-2 rounded-bl-full rounded-tr-xl bg-[#ffb04d]">
                <svg class="w-[14px] h-[14px]" viewBox="0 0 24 24" fill="#fff"><path id="star" d="M12 1l3.400 7 7.600 1-5.500 5.300 1.400 7.700-6.900-3.700L5.100 22l1.400-7.700L1 9l7.600-1z"/></svg>
            </span>
        </article>
        <article class="relative flex gap-[22px] px-[30px] pt-[30px] pb-8 rounded-xl shadow-[0_0_20px_rgba(0,0,0,0.1)]">
            <a class="shrink-0 w-[124px] h-5 shadow-[0_0_8px_rgba(0,0,0,0.1)] flex items-start gap-[2px] font-['Liberation_Sans'] font-bold text-[#333] whitespace-nowrap" href="#">
                <svg class="w-4 h-4 ml-px mt-px" viewBox="0 0 16 16" fill="none" stroke="#222" stroke-width="2.400"><path d="M1.200 0v16M1 8h7M8.500 0v16M8.500 1.200h3.500q2.500 0 2.500 3.200T12 7.800H8.500M12 7.800q3 0 3 3.500t-3 3.500H8.500"/></svg>
                <span class="text-[8px] leading-3">PRECISION PRODUCTS, INC.</span>
            </a>
            <h2 class="text-[22px] leading-6 font-bold tracking-[1px]"><a href="#">CNC Machinist Jobs in<br>Greenville RI</a></h2>
            <span class="absolute top-0 right-0 flex items-center justify-center w-[50px] h-[50px] pl-3 pb-2 rounded-bl-full rounded-tr-xl bg-[#ffb04d]">
                <svg class="w-[14px] h-[14px]" viewBox="0 0 24 24" fill="#fff"><use href="#star"/></svg>
            </span>
        </article>
    </div>
</main>

</body>
</html>
